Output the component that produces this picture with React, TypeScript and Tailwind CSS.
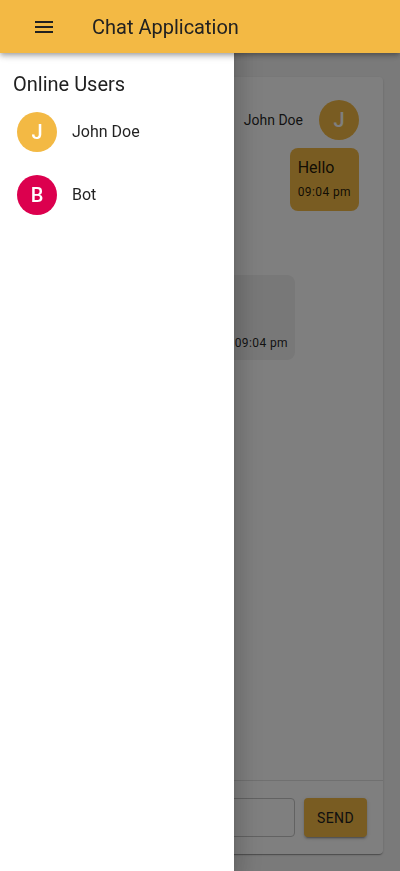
import React from "react";

const font = { fontFamily: "Roboto, 'Liberation Sans', sans-serif" };

function MenuIcon() {
  return (
    <svg width="24" height="24" viewBox="0 0 24 24" fill="currentColor">
      <path d="M3 18h18v-2H3v2zm0-5h18v-2H3v2zm0-7v2h18V6H3z" />
    </svg>
  );
}

function Avatar({ letter, color }: { letter: string; color: string }) {
  return (
    <div
      className={`w-10 h-10 rounded-full flex items-center justify-center text-white text-[20px] font-medium shrink-0 ${color}`}
    >
      {letter}
    </div>
  );
}

export default function App() {
  return (
    <div style={font} className="relative min-h-[871px] w-[400px] bg-[#f5f5f5] text-[rgba(0,0,0,0.87)]">
      {/* App bar */}
      <header className="fixed top-0 left-0 right-0 z-30 h-[53px] bg-[#f3b944] flex items-center shadow-[0_2px_4px_-1px_rgba(0,0,0,0.2),0_4px_5px_0_rgba(0,0,0,0.14),0_1px_10px_0_rgba(0,0,0,0.12)]">
        <div className="w-12 h-12 ml-5 flex items-center justify-center text-[#212121]">
          <MenuIcon />
        </div>
        <h1 className="ml-6 text-[20px] leading-8 font-normal text-[#212121]">Chat Application</h1>
      </header>

      {/* Main content */}
      <main className="pt-[53px] flex flex-col h-[871px]">
        <div className="mx-[17px] mt-6 mb-[17px] flex-1 bg-white rounded flex flex-col shadow-[0_2px_1px_-1px_rgba(0,0,0,0.2),0_1px_1px_0_rgba(0,0,0,0.14),0_1px_3px_0_rgba(0,0,0,0.12)]">
          <div className="flex-1 pt-[23px] pl-[25px] pr-[24px] flex flex-col">
            {/* Outgoing */}
            <div className="flex flex-col items-end">
              <div className="flex items-center gap-4">
                <span className="text-sm">John Doe</span>
                <Avatar letter="J" color="bg-[#f3b944]" />
              </div>
              <div className="mt-2 bg-[#f3b944] rounded-lg px-2 pt-2 pb-[11px]">
                <div className="text-base leading-6">Hello</div>
                <div className="mt-1 text-xs leading-4 tracking-[0.4px]">09:04 pm</div>
              </div>
            </div>
            {/* Incoming */}
            <div className="flex flex-col items-start mt-4">
              <div className="flex items-center gap-4">
                <Avatar letter="B" color="bg-[#dc004e]" />
                <span className="text-sm">Bot</span>
              </div>
              <div className="mt-2 bg-[#f0f0f0] rounded-lg pl-2 pr-[7px] pt-2 pb-[9px] w-[253px]">
                <div className="text-base leading-6">Hi John Doe!</div>
                <div className="text-base leading-6">Welcome.</div>
                <div className="mt-1 text-xs leading-4 tracking-[0.4px] text-right">09:04 pm</div>
              </div>
            </div>
          </div>
          <div className="border-t border-[#e0e0e0] pt-[17px] pb-[17px] pl-4 pr-4 flex items-center gap-[9px]">
            <div className="flex-1 h-[39px] rounded border border-[#c4c4c4]" />
            <button className="h-[39px] w-[63px] rounded bg-[#f3b944] text-sm font-normal tracking-[0.4px] text-[#212121] shadow-[0_3px_1px_-2px_rgba(0,0,0,0.2),0_2px_2px_0_rgba(0,0,0,0.14),0_1px_5px_0_rgba(0,0,0,0.12)]">
              SEND
            </button>
          </div>
        </div>
      </main>

      {/* Backdrop */}
      <div className="fixed inset-0 z-10 bg-black/50" />

      {/* Drawer */}
      <aside className="fixed top-0 left-0 bottom-0 z-20 w-[234px] bg-white pt-[53px] shadow-[0_8px_10px_-5px_rgba(0,0,0,0.2),0_16px_24px_2px_rgba(0,0,0,0.14),0_6px_30px_5px_rgba(0,0,0,0.12)]">
        <h2 className="mt-[15px] ml-[13px] text-[20px] leading-8 font-normal text-[#212121]">Online Users</h2>
        <ul>
          <li className="h-[63px] flex items-center pl-[17px]">
            <Avatar letter="J" color="bg-[#f3b944]" />
            <span className="ml-[15px] text-base">John Doe</span>
          </li>
          <li className="h-[63px] flex items-center pl-[17px]">
            <Avatar letter="B" color="bg-[#dc004e]" />
            <span className="ml-[15px] text-base">Bot</span>
          </li>
        </ul>
      </aside>
    </div>
  );
}
